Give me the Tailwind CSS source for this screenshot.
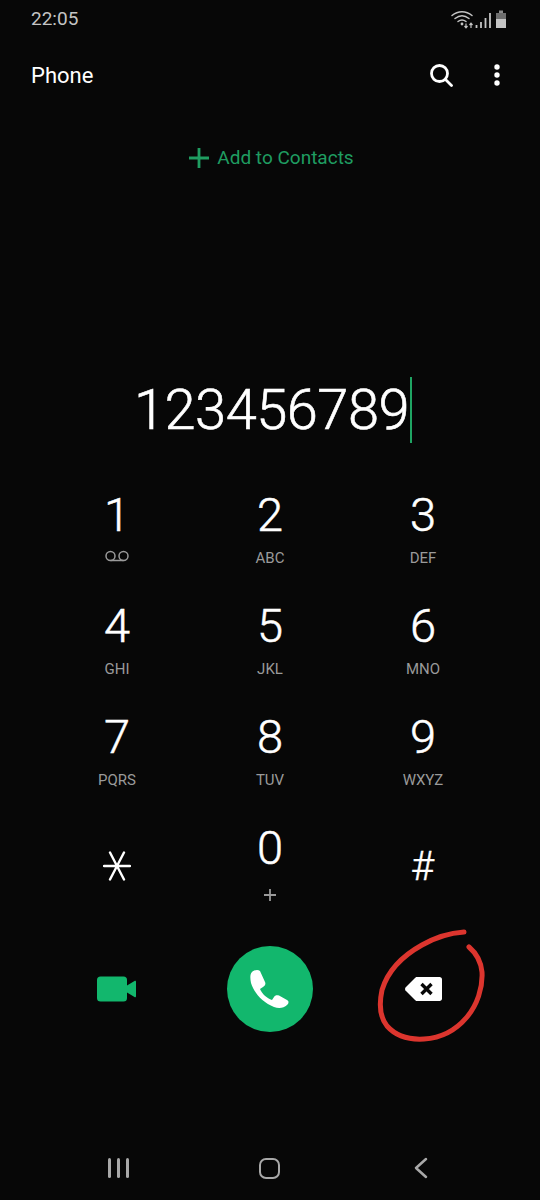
<!DOCTYPE html>
<html lang="en">
  <head>
    <meta charset="UTF-8" />
    <meta name="viewport" content="width=device-width, initial-scale=1.0" />
    <script src="https://cdn.jsdelivr.net/npm/@tailwindcss/browser@4"></script>
    <title>Phone</title>
  </head>
  <body class="bg-[#070707]">
    <div class="relative flex flex-col w-[540px] h-[1200px] overflow-hidden bg-[#070707] text-white font-['Roboto',sans-serif]">
      <!-- status bar -->
      <div class="flex items-center justify-between h-[38px] pl-[31px] pr-[30px] text-[#c4c4c4]">
        <span class="text-[19px] leading-[38px]">22:05</span>
        <svg class="w-[60px] h-[20px]" viewBox="0 0 60 20" fill="none" stroke="#c4c4c4">
          <path d="M2 6.5C8 1.5 16 1.5 22 6.5M5 9.5C9.500 6 14.500 6 19 9.500M8 12.500C10.500 10.500 13.500 10.500 16 12.500" stroke-width="1.500" stroke-linecap="round" />
          <circle cx="12" cy="15" r="1.400" fill="#c4c4c4" stroke="none" />
          <path d="M16 14.500v4M14.500 17l1.500 1.800 1.500-1.800M21 19v-4.500M19.500 16l1.500-1.800 1.500 1.800" stroke-width="1.200" />
          <path d="M26.500 19v-3M31 19v-6M35.500 19v-10M40 19v-15" stroke-width="1.800" />
          <path d="M49 1.500h4v3h-4z" fill="#8c8c8c" stroke="none" />
          <rect x="46" y="4" width="10" height="6" fill="#6e6e6e" stroke="none" />
          <rect x="46" y="10" width="10" height="9" fill="#c4c4c4" stroke="none" />
        </svg>
      </div>

      <!-- app bar -->
      <div class="flex items-center justify-between h-[75px] pl-[31px] pr-[40px]">
        <span class="text-[22px]">Phone</span>
        <div class="flex items-center gap-[41px]">
          <svg class="w-[24px] h-[24px] mt-[-2px]" viewBox="0 0 24 24" fill="none" stroke="white" stroke-width="2.800" stroke-linecap="round">
            <circle cx="10.500" cy="10.500" r="8" />
            <path d="M16.500 16.500l6 6" />
          </svg>
          <svg class="w-[6px] h-[22px] mt-[-2px]" viewBox="0 0 6 22" fill="white">
            <circle cx="3" cy="3" r="2.700" />
            <circle cx="3" cy="11" r="2.700" />
            <circle cx="3" cy="19" r="2.700" />
          </svg>
        </div>
      </div>

      <!-- add to contacts -->
      <div class="flex items-center justify-center gap-[8px] h-[26px] mt-[32px] pl-[3px] text-[#1f9d61]">
        <svg class="w-[20px] h-[20px]" viewBox="0 0 20 20" stroke="#1f9d61" stroke-width="2.800"><path d="M10 0v20M0 10h20" /></svg>
        <span class="text-[19px]">Add to Contacts</span>
      </div>

      <!-- number -->
      <div class="flex items-center justify-center h-[66px] mt-[206px] pl-[6px]">
        <span class="text-[56px] leading-[66px] font-light tracking-[-0.5px] [-webkit-text-stroke:0.6px_white]">123456789</span>
        <span class="w-[2px] h-[66px] ml-[1px] bg-[#1fa463]"></span>
      </div>

      <!-- keypad -->
      <div class="grid grid-cols-[153px_153px_153px] auto-rows-[111px] mx-auto mt-[44px]">
        <div class="flex flex-col items-center">
          <span class="text-[47px] leading-[56px] font-light [-webkit-text-stroke:0.5px_white]">1</span>
          <svg class="w-[26px] h-[12px] mt-[7px]" viewBox="0 0 26 12" fill="none" stroke="#9a9a9a" stroke-width="1.500">
            <circle cx="6.500" cy="6" r="4.500" />
            <circle cx="19.500" cy="6" r="4.500" />
            <path d="M6.500 10.500h13" />
          </svg>
        </div>
        <div class="flex flex-col items-center">
          <span class="text-[47px] leading-[56px] font-light [-webkit-text-stroke:0.5px_white]">2</span>
          <span class="text-[15px] leading-[20px] mt-[5px] text-[#9a9a9a]">ABC</span>
        </div>
        <div class="flex flex-col items-center">
          <span class="text-[47px] leading-[56px] font-light [-webkit-text-stroke:0.5px_white]">3</span>
          <span class="text-[15px] leading-[20px] mt-[5px] text-[#9a9a9a]">DEF</span>
        </div>
        <div class="flex flex-col items-center">
          <span class="text-[47px] leading-[56px] font-light [-webkit-text-stroke:0.5px_white]">4</span>
          <span class="text-[15px] leading-[20px] mt-[5px] text-[#9a9a9a]">GHI</span>
        </div>
        <div class="flex flex-col items-center">
          <span class="text-[47px] leading-[56px] font-light [-webkit-text-stroke:0.5px_white]">5</span>
          <span class="text-[15px] leading-[20px] mt-[5px] text-[#9a9a9a]">JKL</span>
        </div>
        <div class="flex flex-col items-center">
          <span class="text-[47px] leading-[56px] font-light [-webkit-text-stroke:0.5px_white]">6</span>
          <span class="text-[15px] leading-[20px] mt-[5px] text-[#9a9a9a]">MNO</span>
        </div>
        <div class="flex flex-col items-center">
          <span class="text-[47px] leading-[56px] font-light [-webkit-text-stroke:0.5px_white]">7</span>
          <span class="text-[15px] leading-[20px] mt-[5px] text-[#9a9a9a]">PQRS</span>
        </div>
        <div class="flex flex-col items-center">
          <span class="text-[47px] leading-[56px] font-light [-webkit-text-stroke:0.5px_white]">8</span>
          <span class="text-[15px] leading-[20px] mt-[5px] text-[#9a9a9a]">TUV</span>
        </div>
        <div class="flex flex-col items-center">
          <span class="text-[47px] leading-[56px] font-light [-webkit-text-stroke:0.5px_white]">9</span>
          <span class="text-[15px] leading-[20px] mt-[5px] text-[#9a9a9a]">WXYZ</span>
        </div>
        <div class="flex justify-center pt-[31px]">
          <svg class="w-[28px] h-[30px]" viewBox="0 0 28 30" stroke="white" stroke-width="2.400" stroke-linecap="round">
            <path d="M1 15h26M7 1.500l14 27M21 1.500l-14 27" />
          </svg>
        </div>
        <div class="flex flex-col items-center">
          <span class="text-[47px] leading-[56px] font-light [-webkit-text-stroke:0.5px_white]">0</span>
          <svg class="w-[12px] h-[12px] mt-[13px]" viewBox="0 0 12 12" stroke="#9a9a9a" stroke-width="1.800"><path d="M6 0v12M0 6h12" /></svg>
        </div>
        <div class="flex justify-center pt-[23px] pr-[1px]">
          <span class="text-[40px] leading-[48px] font-light [-webkit-text-stroke:0.4px_white]">#</span>
        </div>
      </div>

      <!-- action row -->
      <div class="grid grid-cols-[153px_153px_153px] items-center mx-auto mt-[15px]">
        <div class="flex justify-center">
          <svg class="w-[40px] h-[26px]" viewBox="0 0 40 26" fill="#12b76d">
            <rect x="0" y="0.500" width="30" height="25" rx="3.500" />
            <path d="M30 9.500l7.500-4.500c1-.6 1.500 0 1.500 1v14c0 1-.5 1.600-1.500 1l-7.500-4.500z" />
          </svg>
        </div>
        <div class="flex justify-center">
          <div class="flex items-center justify-center w-[86px] h-[86px] rounded-full bg-[#12b76d]">
            <svg class="w-[86px] h-[86px]" viewBox="0 0 86 86" fill="white">
              <path d="M25 26C27 24 31 23 33 25L38 36C39 38 38 40 36 41L33 43C35 48 40 52 45 54L47 51C48 49 50 49 52 49.500L60 54C62 55 62 57 60 59C57 62 52 63 47 61C36 57 27 47 24 37C23 32 23 28 25 26Z" />
            </svg>
          </div>
        </div>
        <div class="flex justify-center">
          <svg class="w-[37px] h-[24px]" viewBox="0 0 37 24" fill="white">
            <path d="M12 0H34.500C36 0 37 1 37 2.500V21.500C37 23 36 24 34.500 24H12C11 24 10.500 23.500 10 23L0.500 13.500C-0.100 12.700 -0.100 11.300 0.500 10.500L10 1C10.500 .5 11 0 12 0Z" />
            <path d="M16.500 7l10 10M26.500 7l-10 10" stroke="#070707" stroke-width="3.400" fill="none" />
          </svg>
        </div>
      </div>

      <!-- nav bar -->
      <div class="grid grid-cols-[153px_153px_153px] items-center mx-auto mt-[125px] text-[#a8a8a8]">
        <div class="flex justify-center gap-[6px] pl-[2px]">
          <span class="w-[3px] h-[20px] rounded-full bg-[#a8a8a8]"></span>
          <span class="w-[3px] h-[20px] rounded-full bg-[#a8a8a8]"></span>
          <span class="w-[3px] h-[20px] rounded-full bg-[#a8a8a8]"></span>
        </div>
        <div class="flex justify-center pr-[1px]">
          <span class="w-[21px] h-[21px] rounded-[7px] border-[2.500px] border-[#a8a8a8]"></span>
        </div>
        <div class="flex justify-center pr-[4px]">
          <svg class="w-[14px] h-[22px]" viewBox="0 0 14 22" fill="none" stroke="#a8a8a8" stroke-width="2.500" stroke-linecap="round" stroke-linejoin="round">
            <path d="M12 2L2 11L12 20" />
          </svg>
        </div>
      </div>

      <!-- red hand drawn circle, annotation on top of the screenshot -->
      <svg class="absolute left-[370px] top-[920px] w-[125px] h-[130px]" viewBox="0 0 125 130" fill="none" stroke="#dc352e" stroke-width="5" stroke-linecap="round" stroke-linejoin="round">
        <path d="M94 12C80 13 66 17 52 25C34 35 18 50 12 70C9 84 9 96 17 106C25 115 38 120 54 119C72 118 87 109 97 97C107 85 113 68 112 52C111 42 106 33 99 27" />
      </svg>
    </div>
  </body>
</html>
